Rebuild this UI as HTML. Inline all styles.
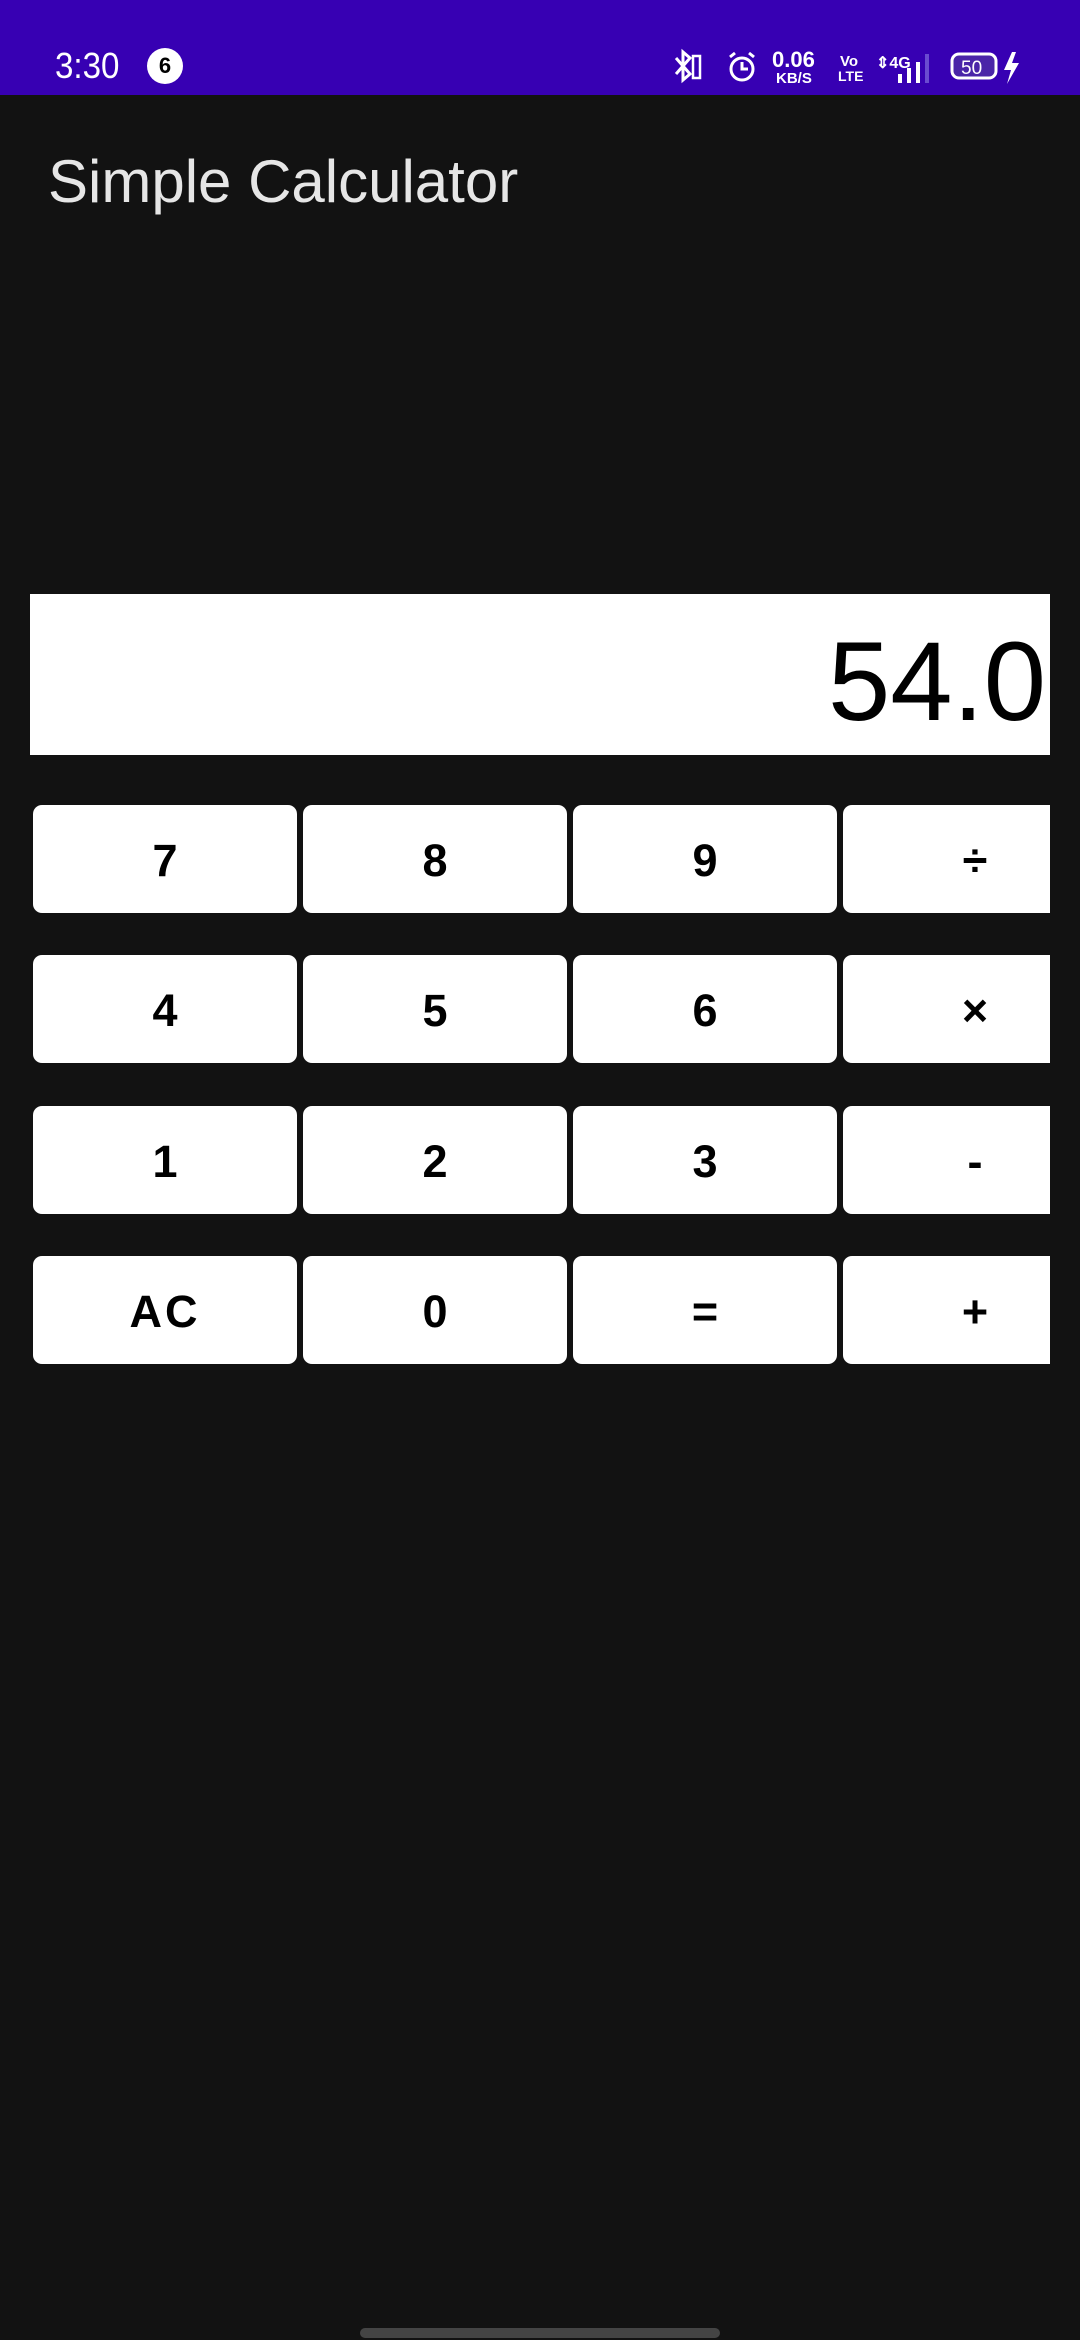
<!DOCTYPE html>
<html><head><meta charset="utf-8"><style>
html,body{margin:0;padding:0;width:1080px;height:2340px;background:#121212;overflow:hidden;font-family:"Liberation Sans",sans-serif;}
.sb{position:absolute;left:0;top:0;width:1080px;height:95px;background:#3700B3;color:#fff;}
.time{position:absolute;left:55px;top:44px;font-size:36px;line-height:44px;transform:scaleX(0.92);transform-origin:left;}
.badge{position:absolute;left:147px;top:48px;width:36px;height:36px;border-radius:50%;background:#fff;color:#000;font-size:22px;font-weight:bold;text-align:center;line-height:36px;}
.title{position:absolute;left:48px;top:142px;font-size:60px;color:#e6e6e6;line-height:80px;}
.disp{position:absolute;left:30px;top:594px;width:1020px;height:161px;background:#fff;overflow:hidden;}
.disp span{position:absolute;right:4px;top:28px;font-size:112px;line-height:120px;color:#000;}
.btn{position:absolute;width:264px;height:108px;background:#fff;border-radius:9px;color:#000;font-size:45px;text-align:center;line-height:112px;font-weight:bold;}
.clip{position:absolute;left:0;top:0;width:1050px;height:2340px;overflow:hidden;}
.nav{position:absolute;left:360px;top:2328px;width:360px;height:10px;border-radius:5px;background:#444;}
</style></head><body>
<div class="sb">
<div class="time">3:30</div>
<div class="badge">6</div>
<svg style="position:absolute;left:672px;top:48px" width="360" height="38" viewBox="0 0 360 38">
<path d="M4 10 L18 26 L11 32 L11 4 L18 10 L4 26" stroke="#fff" stroke-width="3" fill="none"/>
<rect x="21" y="8" width="7" height="22" stroke="#fff" stroke-width="2.5" fill="none"/>
<circle cx="70" cy="21" r="11" stroke="#fff" stroke-width="3" fill="none"/>
<path d="M70 14 V21 H76 M58 9 L63 5 M82 9 L77 5" stroke="#fff" stroke-width="3" fill="none"/>
<text x="100" y="19" font-size="22" font-weight="bold" fill="#fff" font-family="Liberation Sans">0.06</text>
<text x="104" y="35" font-size="15" font-weight="bold" fill="#fff" font-family="Liberation Sans">KB/S</text>
<text x="168" y="18" font-size="15" font-weight="bold" fill="#fff" font-family="Liberation Sans">Vo</text>
<text x="166" y="33" font-size="14" font-weight="bold" fill="#fff" font-family="Liberation Sans">LTE</text>
<text x="204" y="20" font-size="16" font-weight="bold" fill="#fff" font-family="Liberation Sans">⇕4G</text>
<rect x="226" y="26" width="4" height="9" fill="#fff"/><rect x="235" y="20" width="4" height="15" fill="#fff"/><rect x="244" y="14" width="4" height="21" fill="#fff"/><rect x="253" y="6" width="4" height="29" fill="#6a4bd0"/>
<rect x="280" y="6" width="44" height="24" rx="7" stroke="#fff" stroke-width="3" fill="#4a25a8"/>
<text x="289" y="26" font-size="19" fill="#fff" font-family="Liberation Sans">50</text>
<path d="M340 4 L332 22 H339 L335 36 L347 15 H340 L344 4Z" fill="#fff"/>
</svg>
</div>
<div class="title">Simple Calculator</div>
<div class="disp"><span>54.0</span></div>
<div class="clip">
<div class="btn" style="left:33px;top:805px">7</div>
<div class="btn" style="left:303px;top:805px">8</div>
<div class="btn" style="left:573px;top:805px">9</div>
<div class="btn" style="left:843px;top:805px">÷</div>
<div class="btn" style="left:33px;top:955px">4</div>
<div class="btn" style="left:303px;top:955px">5</div>
<div class="btn" style="left:573px;top:955px">6</div>
<div class="btn" style="left:843px;top:955px">×</div>
<div class="btn" style="left:33px;top:1106px">1</div>
<div class="btn" style="left:303px;top:1106px">2</div>
<div class="btn" style="left:573px;top:1106px">3</div>
<div class="btn" style="left:843px;top:1106px">-</div>
<div class="btn" style="left:33px;top:1256px;letter-spacing:3px">AC</div>
<div class="btn" style="left:303px;top:1256px">0</div>
<div class="btn" style="left:573px;top:1256px">=</div>
<div class="btn" style="left:843px;top:1256px">+</div>
</div>
<div class="nav"></div>
</body></html>
